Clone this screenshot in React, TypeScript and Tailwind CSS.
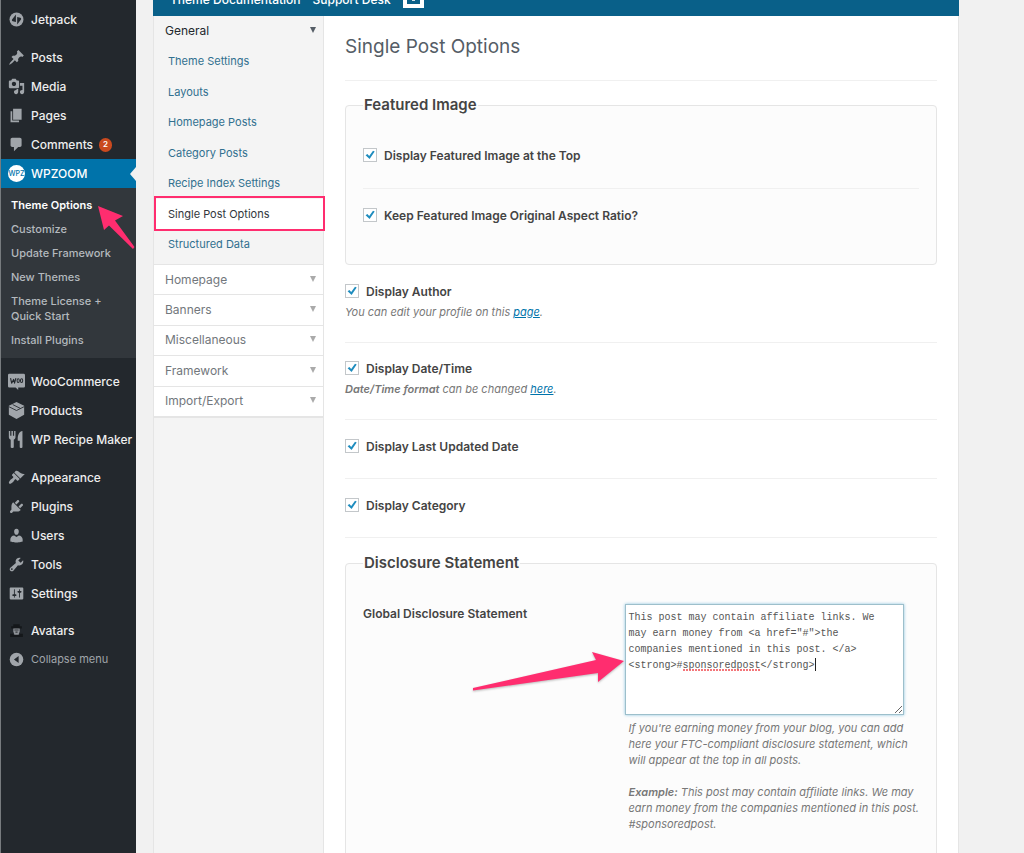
import { useState } from "react";
import type { ReactNode } from "react";

const iconPaths: Record<string, string> = {
  posts:
    "M10.44 3.02l1.82-1.82 6.36 6.35-1.83 1.82c-1.05-.68-2.48-.57-3.41.36l-.75.75c-.92.93-1.04 2.35-.35 3.41l-1.83 1.82-2.41-2.41-2.8 2.79c-.42.42-3.38 2.71-3.8 2.29s1.86-3.39 2.28-3.81l2.79-2.79L4.1 9.36l1.83-1.82c1.05.69 2.48.57 3.4-.36l.75-.75c.93-.92 1.05-2.35.36-3.41z",
  media:
    "M13 11V4c0-.55-.45-1-1-1h-1.67L9 1H5L3.67 3H2c-.55 0-1 .45-1 1v7c0 .55.45 1 1 1h10c.55 0 1-.45 1-1zM7 4.5c1.38 0 2.5 1.12 2.5 2.5S8.38 9.5 7 9.5 4.5 8.38 4.5 7 5.62 4.5 7 4.5zM14 6h5v10.5c0 1.38-1.12 2.5-2.5 2.5S14 17.88 14 16.5s1.12-2.5 2.5-2.5c.17 0 .34.02.5.05V9h-3V6zm-4 8.05V13h2v3.5c0 1.38-1.12 2.5-2.5 2.5S7 17.88 7 16.5 8.12 14 9.5 14c.17 0 .34.02.5.05z",
  pages: "M6 15V2h10v13H6zm-1 1h8v2H3V5h2v11z",
  comments: "M5 2h9c1.1 0 2 .9 2 2v7c0 1.1-.9 2-2 2h-2l-5 5v-5H5c-1.1 0-2-.9-2-2V4c0-1.1.9-2 2-2z",
  appearance:
    "M14.48 11.06L7.41 3.99l1.5-1.5c.5-.56 2.3-.47 3.51.32 1.21.8 1.43 1.28 2.91 2.1 1.18.64 2.45 1.26 4.45.85zm-.71.71L6.7 4.7 4.93 6.47c-.39.39-.39 1.02 0 1.41l1.06 1.06c.39.39.39 1.03 0 1.42-.6.6-1.43 1.11-2.21 1.69-.35.26-.7.53-1.01.84C1.43 14.23.4 16.08 1.4 17.07c.99 1 2.84-.03 4.18-1.36.31-.31.58-.66.85-1.02.57-.78 1.08-1.61 1.69-2.21.39-.39 1.02-.39 1.41 0l1.06 1.06c.39.39 1.02.39 1.41 0z",
  plugins:
    "M13.11 4.36L9.87 7.6 8 5.73l3.24-3.24c.35-.34 1.05-.2 1.56.32.52.51.66 1.21.31 1.55zm-8 1.77l.91-1.12 9.01 9.01-1.19.84c-.71.71-2.63 1.16-3.82 1.16H6.14L4.9 17.26c-.59.59-1.54.59-2.12 0-.59-.58-.59-1.53 0-2.12l1.24-1.24v-3.88c0-1.13.4-3.19 1.09-3.89zm7.26 3.97l3.24-3.24c.34-.35 1.04-.21 1.55.31.52.51.66 1.21.31 1.55l-3.24 3.25z",
  users:
    "M10 9.25c-2.27 0-2.73-3.44-2.73-3.44C7 4.02 7.82 2 9.97 2c2.16 0 2.98 2.02 2.71 3.81 0 0-.41 3.44-2.68 3.44zm0 2.57L12.72 10c2.39 0 4.52 2.33 4.52 4.53v2.49s-3.65 1.13-7.24 1.13c-3.65 0-7.24-1.13-7.24-1.13v-2.49c0-2.25 1.94-4.48 4.47-4.48z",
  tools:
    "M16.68 9.77c-1.34 1.34-3.3 1.67-4.95.99l-5.41 6.52c-.99.99-2.59.99-3.58 0s-.99-2.59 0-3.57l6.52-5.42c-.68-1.65-.35-3.61.99-4.95 1.28-1.28 3.12-1.62 4.72-1.06l-2.89 2.89 2.82 2.82 2.86-2.87c.53 1.58.18 3.39-1.08 4.65zM3.81 16.21c.4.39 1.04.39 1.43 0 .4-.4.4-1.04 0-1.43-.39-.4-1.03-.4-1.43 0-.39.39-.39 1.03 0 1.43z",
  settings:
    "M18 16V4c0-.55-.45-1-1-1H3c-.55 0-1 .45-1 1v12c0 .55.45 1 1 1h14c.55 0 1-.45 1-1zM8 11h1c.55 0 1 .45 1 1s-.45 1-1 1H8v1.5c0 .28-.22.5-.5.5s-.5-.22-.5-.5V13H6c-.55 0-1-.45-1-1s.45-1 1-1h1V5.5c0-.28.22-.5.5-.5s.5.22.5.5V11zm5-2h-1c-.55 0-1-.45-1-1s.45-1 1-1h1V5.5c0-.28.22-.5.5-.5s.5.22.5.5V7h1c.55 0 1 .45 1 1s-.45 1-1 1h-1v5.5c0 .28-.22.5-.5.5s-.5-.22-.5-.5V9z",
};

function Icon({ name }: { name: string }) {
  const common = "size-[17px] shrink-0 text-[#a0a5aa]";
  switch (name) {
    case "jetpack":
      return (
        <svg className={common} viewBox="0 0 20 20" aria-hidden="true">
          <circle cx="10" cy="10" r="8.2" fill="currentColor" />
          <path d="M9.3 4.2V13L5.6 12c-1-.3-1.2-1.2-.8-2zM10.8 15.8V7l3.7 1c1 .3 1.2 1.2.8 2z" fill="#23282d" />
        </svg>
      );
    case "wpzoom":
      return (
        <span className="flex size-[17px] shrink-0 items-center justify-center overflow-hidden rounded-full bg-white text-[7px] font-medium leading-none text-[#0073aa]">
          WPZ
        </span>
      );
    case "woo":
      return (
        <svg className={common} viewBox="0 0 20 20" aria-hidden="true">
          <path d="M1.500 1h17A1.500 1.500 0 0 1 20 2.500v13a1.500 1.500 0 0 1-1.500 1.500H12v3l-3-3H1.500A1.500 1.500 0 0 1 0 15.500v-13A1.500 1.500 0 0 1 1.500 1z" fill="currentColor" />
          <path d="M3 6l1.300 6 2.400-4.500 1 4.500L9.300 6" fill="none" stroke="#23282d" strokeWidth="1.3" strokeLinejoin="round" />
          <ellipse cx="12" cy="9" rx="1.3" ry="2.2" fill="none" stroke="#23282d" strokeWidth="1.2" />
          <ellipse cx="16" cy="9" rx="1.3" ry="2.2" fill="none" stroke="#23282d" strokeWidth="1.2" />
        </svg>
      );
    case "products":
      return (
        <svg className={common} viewBox="0 0 20 20" aria-hidden="true">
          <path d="M10 0l9 4.500V15l-9 5-9-5V4.500z" fill="currentColor" />
          <path d="M1 5.500l9 4.500 9-4.500M5.500 3l9 4.500" fill="none" stroke="#23282d" strokeWidth="1" />
        </svg>
      );
    case "recipe":
      return (
        <svg className={common} viewBox="0 0 20 20" aria-hidden="true">
          <path d="M1 0h1.600v5.500h1.400V0h1.800v5.500h1.400V0h1.600v7c0 1.800-.9 2.800-2 3.200V19c0 1.300-3.600 1.300-3.600 0v-8.800C1.900 9.800 1 8.800 1 7zM17 0v19c0 1.300-3.200 1.300-3.200 0v-7.500H11.500C11 5 13 .5 17 0z" fill="currentColor" />
        </svg>
      );
    case "avatars":
      return (
        <svg className="size-[17px] shrink-0" viewBox="0 0 16 16" aria-hidden="true">
          <path d="M5 2h6v2h2v2H3V4h2zM2 11h3v1h6v-1h3v3H2z" fill="#14171a" />
          <path d="M5 6h6v3l-1 3H6L5 9z" fill="#8d9196" />
          <path d="M6 7.500h4M7 9.500h2" stroke="#33373b" />
        </svg>
      );
    case "collapse":
      return (
        <svg className={common} viewBox="0 0 20 20" aria-hidden="true">
          <circle cx="10" cy="10" r="8" fill="currentColor" />
          <path d="M12.500 6v8L7 10z" fill="#23282d" />
        </svg>
      );
    default:
      return (
        <svg className={common} viewBox="0 0 20 20" aria-hidden="true">
          <path d={iconPaths[name]} fill="currentColor" />
        </svg>
      );
  }
}

function MenuItem({ icon, label, badge, active }: { icon: string; label: string; badge?: string; active?: boolean }) {
  return (
    <li>
      <a
        href="#"
        className={
          active
            ? "relative flex h-[29px] items-center gap-1.5 bg-[#0073aa] pl-[7px] text-xs font-medium text-white"
            : "relative flex h-[29px] items-center gap-1.5 pl-[7px] text-xs font-medium text-[#eee]"
        }
      >
        <Icon name={icon} />
        <span>{label}</span>
        {badge && (
          <span className="flex h-3.5 min-w-[13px] items-center justify-center rounded-full bg-[#ca4a1f] text-[8px] font-semibold text-white">
            {badge}
          </span>
        )}
        {active && (
          <svg className="absolute right-0 top-2 h-3.5 w-1.5" viewBox="0 0 6 14" aria-hidden="true">
            <path d="M6 0v14L0 7z" fill="#f1f1f1" />
          </svg>
        )}
      </a>
    </li>
  );
}

const subItems = ["Customize", "Update Framework", "New Themes", "Theme License + Quick Start", "Install Plugins"];

function AdminMenu() {
  return (
    <nav aria-label="Admin menu" className="w-[136px] shrink-0 border-l border-[#777b7e] bg-[#23282d] pt-[5px]">
      <ul>
        <MenuItem icon="jetpack" label="Jetpack" />
      </ul>
      <ul className="mt-[9px]">
        <MenuItem icon="posts" label="Posts" />
        <MenuItem icon="media" label="Media" />
        <MenuItem icon="pages" label="Pages" />
        <MenuItem icon="comments" label="Comments" badge="2" />
        <MenuItem icon="wpzoom" label="WPZOOM" active />
      </ul>
      <ul className="relative flex flex-col gap-[9px] bg-[#32373c] py-2.5 pl-2.5 pr-6 text-[11px] font-medium leading-[15px] text-[#b4b9be]">
        <li>
          <a href="#" className="whitespace-nowrap font-semibold text-white">
            Theme Options
          </a>
          <svg className="absolute left-24 top-[17px] h-12 w-10" viewBox="0 0 40 48" aria-hidden="true">
            <path d="M1 1l25 10-8 4.500L37.500 42 36 44 12 20.500 7 25z" fill="#ff2d6f" />
          </svg>
        </li>
        {subItems.map((item) => (
          <li key={item}>
            <a href="#">{item}</a>
          </li>
        ))}
      </ul>
      <ul className="mt-[9px]">
        <MenuItem icon="woo" label="WooCommerce" />
        <MenuItem icon="products" label="Products" />
        <MenuItem icon="recipe" label="WP Recipe Maker" />
      </ul>
      <ul className="mt-[9px]">
        <MenuItem icon="appearance" label="Appearance" />
        <MenuItem icon="plugins" label="Plugins" />
        <MenuItem icon="users" label="Users" />
        <MenuItem icon="tools" label="Tools" />
        <MenuItem icon="settings" label="Settings" />
      </ul>
      <ul className="mt-2">
        <MenuItem icon="avatars" label="Avatars" />
      </ul>
      <button type="button" className="flex h-[29px] items-center gap-1.5 pl-[7px] text-[11px] text-[#a0a5aa]">
        <Icon name="collapse" />
        Collapse menu
      </button>
    </nav>
  );
}

const generalItems = [
  "Theme Settings",
  "Layouts",
  "Homepage Posts",
  "Category Posts",
  "Recipe Index Settings",
  "Single Post Options",
  "Structured Data",
];

function Caret({ dark }: { dark?: boolean }) {
  return (
    <svg className={dark ? "mb-0.5 size-1.5 text-[#555d66]" : "mb-0.5 size-1.5 text-[#aaa]"} viewBox="0 0 6 6" aria-hidden="true">
      <path d="M0 0h6L3 6z" fill="currentColor" />
    </svg>
  );
}

function OptionsNav() {
  return (
    <nav aria-label="Theme options" className="w-[171px] shrink-0 border-x border-[#e5e5e5] bg-[#f4f4f4] text-xs">
      <button type="button" className="flex h-[30px] w-full items-center justify-between pl-[11px] pr-[7px] text-[#23282d]">
        General
        <Caret dark />
      </button>
      <ul className="mb-1 grid h-[214px] auto-rows-fr text-[11px]">
        {generalItems.map((item) =>
          item === "Single Post Options" ? (
            <li key={item} className="relative">
              <a href="#" aria-current="page" className="flex h-full items-center bg-white pl-3.5 text-[#32373c]">
                {item}
              </a>
              <span className="pointer-events-none absolute -bottom-0.5 -right-0.5 -top-[3px] left-0 border-2 border-[#ff2d6f]" />
            </li>
          ) : (
            <li key={item}>
              <a href="#" className="flex h-full items-center pl-3.5 text-[#31708f]">
                {item}
              </a>
            </li>
          ),
        )}
      </ul>
      <ul className="grid h-[154px] auto-rows-fr border-b-2 border-[#e5e5e5]">
        {["Homepage", "Banners", "Miscellaneous", "Framework", "Import/Export"].map((item) => (
          <li key={item} className="border-t border-[#e5e5e5] bg-white">
            <button type="button" className="flex h-full w-full items-center justify-between pl-[11px] pr-[7px] text-[#72777c]">
              {item}
              <Caret />
            </button>
          </li>
        ))}
      </ul>
    </nav>
  );
}

function Check({ id, label }: { id: string; label: string }) {
  const [checked, setChecked] = useState(true);
  return (
    <div className="flex h-4 items-center gap-[7px]">
      <span className="relative size-3.5 shrink-0">
        <input
          id={id}
          type="checkbox"
          checked={checked}
          onChange={(e) => setChecked(e.target.checked)}
          className="block size-3.5 appearance-none border border-[#c3c7ca] bg-white"
        />
        {checked && (
          <svg className="pointer-events-none absolute inset-0 size-3.5" viewBox="0 0 14 14" aria-hidden="true">
            <path d="M2.600 7.200l1.800-1.100 1.800 2L10 2.700l1.700.8-5.100 7.600z" fill="#1e8cbe" />
          </svg>
        )}
      </span>
      <label htmlFor={id} className="pt-0.5 text-xs font-semibold text-[#444]">
        {label}
      </label>
    </div>
  );
}

function Group({ title, children }: { title: string; children: ReactNode }) {
  return (
    <fieldset className="rounded border border-[#e5e5e5] bg-[#fcfcfc] px-[17px]">
      <legend className="px-px text-[15px] font-semibold leading-5 text-[#444]">{title}</legend>
      {children}
    </fieldset>
  );
}

const linkClass = "text-[#0073aa] underline";

function DisclosureField() {
  return (
    <div className="-mr-2 grid grid-cols-[262fr_303fr] pb-20 pt-[31px]">
      <label htmlFor="disclosure" className="pt-0.5 text-xs font-semibold text-[#444]">
        Global Disclosure Statement
      </label>
      <div className="relative">
        <textarea
          id="disclosure"
          spellCheck={false}
          className="block h-[111px] w-[279px] border border-[#9dbfcb] bg-white px-[3px] py-[5px] font-['Liberation_Mono',monospace] text-[10px] leading-4 text-[#555] shadow-[0_0_3px_#8cc5df] outline-none"
          defaultValue={
            'This post may contain affiliate links. We\nmay earn money from <a href="#">the\ncompanies mentioned in this post. </a>\n<strong>#sponsoredpost</strong>'
          }
        />
        <svg className="pointer-events-none absolute left-[58px] top-[54px] h-3.5 w-[134px]" viewBox="0 0 134 14" aria-hidden="true">
          <path d="M0 12h78" stroke="#f0494f" strokeWidth="1.6" strokeDasharray="2 1" />
          <path d="M132.500 0v13" stroke="#222" />
        </svg>
        <p className="mt-[5px] pl-1 text-[11px] italic leading-4 text-[#777]">
          If you're earning money from your blog, you can add here your FTC-compliant disclosure statement, which will
          appear at the top in all posts.
          <br />
          <br />
          <strong className="font-semibold">Example:</strong> This post may contain affiliate links. We may earn money
          from the companies mentioned in this post. #sponsoredpost.
        </p>
        <svg
          className="absolute -left-[153px] top-12 h-10 w-[153px] drop-shadow-[0_1px_1px_#0004]"
          viewBox="0 0 153 40"
          aria-hidden="true"
        >
          <path d="M152 9L120 0l4 8L1 36v2.500l125-17.500v9z" fill="#ff2d6f" />
        </svg>
      </div>
    </div>
  );
}

export default function App() {
  return (
    <div className="flex h-screen overflow-hidden bg-[#f1f1f1] font-['Inter',sans-serif]">
      <AdminMenu />
      <div className="ml-[17px] mr-[65px] flex min-w-0 grow flex-col">
        <header className="flex h-4 shrink-0 items-end overflow-hidden bg-[#096089] pl-[17px] text-xs font-medium leading-4 text-white">
          <div className="flex items-end gap-3 pb-2">
            <a href="#">Theme Documentation</a>
            <a href="#">Support Desk</a>
            <svg className="h-5 w-[21px]" viewBox="0 0 21 20" aria-hidden="true">
              <path d="M0 0h21v20H0zM4 3v13h13V3z" fill="#fff" fillRule="evenodd" />
              <path d="M9 11h3v2H9z" fill="#fff" opacity=".8" />
            </svg>
          </div>
        </header>
        <div className="flex min-h-0 grow border-r border-[#e5e5e5] bg-white">
          <OptionsNav />
          <main className="min-w-0 grow px-[21px] text-[#444]">
            <h1 className="border-b border-[#f0f0f0] pb-5 pt-[18px] text-[19px] leading-[26px] text-[#555d66]">
              Single Post Options
            </h1>
            <div className="pb-[18px] pt-3.5">
              <Group title="Featured Image">
                <div className="border-b border-[#f0f0f0] pb-[25px] pt-8">
                  <Check id="featured-top" label="Display Featured Image at the Top" />
                </div>
                <div className="pb-[41px] pt-[18px]">
                  <Check id="aspect" label="Keep Featured Image Original Aspect Ratio?" />
                </div>
              </Group>
            </div>
            <div className="border-b border-[#f0f0f0] pb-[22px]">
              <Check id="author" label="Display Author" />
              <p className="mt-[5px] text-[11px] italic leading-4 text-[#777]">
                You can edit your profile on this{" "}
                <a href="#" className={linkClass}>
                  page
                </a>
                .
              </p>
            </div>
            <div className="border-b border-[#f0f0f0] pb-[22px] pt-[17px]">
              <Check id="date" label="Display Date/Time" />
              <p className="mt-[5px] text-[11px] italic leading-4 text-[#777]">
                <strong className="font-semibold">Date/Time format</strong> can be changed{" "}
                <a href="#" className={linkClass}>
                  here
                </a>
                .
              </p>
            </div>
            <div className="border-b border-[#f0f0f0] pb-6 pt-[18px]">
              <Check id="updated" label="Display Last Updated Date" />
            </div>
            <div className="border-b border-[#f0f0f0] pb-6 pt-[18px]">
              <Check id="category" label="Display Category" />
            </div>
            <div className="pt-[15px]">
              <Group title="Disclosure Statement">
                <DisclosureField />
              </Group>
            </div>
          </main>
        </div>
      </div>
    </div>
  );
}
